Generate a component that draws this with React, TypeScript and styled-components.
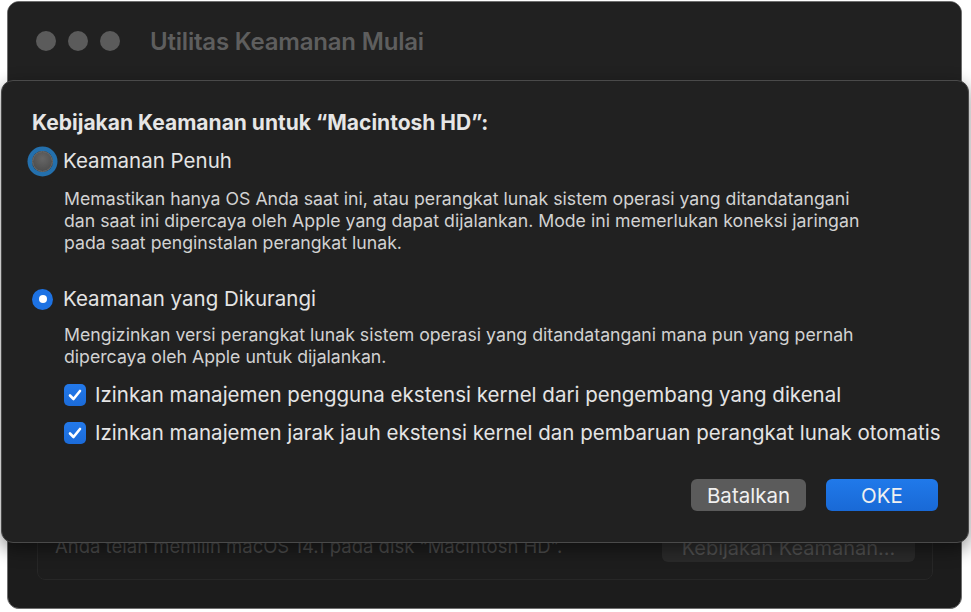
import React from 'react';
import styled, { createGlobalStyle } from 'styled-components';

const GlobalStyle = createGlobalStyle`
  html, body {
    margin: 0;
    padding: 0;
    background: #ffffff;
  }
  body {
    font-family: 'Inter', 'Noto Sans', 'Liberation Sans', sans-serif;
    -webkit-font-smoothing: antialiased;
  }
`;

const Stage = styled.div`
  position: relative;
  width: 971px;
  height: 612px;
  overflow: hidden;
  background: #ffffff;
`;

const Window = styled.div`
  position: absolute;
  left: 7px;
  top: 1px;
  width: 955px;
  height: 608px;
  box-sizing: border-box;
  border: 1px solid #6e6e6e;
  border-radius: 12px;
  background: #1c1c1c;
  display: flex;
  flex-direction: column;
  overflow: hidden;
`;

const TitleBar = styled.div`
  height: 78px;
  flex: none;
  display: flex;
  align-items: center;
  gap: 12px;
  padding-left: 28px;
  background: #212121;
`;

const Light = styled.span`
  width: 20px;
  height: 20px;
  border-radius: 50%;
  background: #5b5b5b;
`;

const WindowTitle = styled.div`
  margin-left: 18px;
  font-size: 24px;
  font-weight: 600;
  color: #5e5e5e;
  letter-spacing: -0.2px;
`;

const WindowBody = styled.div`
  flex: 1;
  display: flex;
  flex-direction: column;
  justify-content: flex-end;
  padding: 0 28px 28px 29px;
`;

const GroupBox = styled.div`
  display: flex;
  align-items: flex-end;
  justify-content: space-between;
  height: 90px;
  box-sizing: border-box;
  padding: 0 17px 17px 17px;
  border: 1px solid #272727;
  border-radius: 8px;
  background: #1d1d1d;
`;

const GroupText = styled.span`
  font-size: 18.5px;
  line-height: 28px;
  margin-bottom: 2px;
  color: #4a4a4a;
`;

const GhostButton = styled.div`
  width: 253px;
  height: 28px;
  border-radius: 6px;
  background: #2a2a2a;
  color: #505050;
  font-size: 20px;
  display: flex;
  align-items: center;
  justify-content: center;
`;

const Sheet = styled.div`
  position: absolute;
  left: 1px;
  top: 80px;
  width: 968px;
  height: 463px;
  box-sizing: border-box;
  border: 1px solid #4a4a4a;
  border-radius: 12px;
  background: #212121;
  box-shadow: 0 6px 18px rgba(0, 0, 0, 0.45);
  padding: 29px 0 0 30px;
  display: flex;
  flex-direction: column;
`;

const Heading = styled.div`
  font-size: 21px;
  font-weight: 700;
  color: #e6e6e6;
  line-height: 26px;
`;

const OptionRow = styled.div<{ $top: number }>`
  display: flex;
  align-items: center;
  gap: 10px;
  margin-top: ${p => p.$top}px;
`;

const RadioOff = styled.span`
  width: 21px;
  height: 21px;
  border-radius: 50%;
  box-sizing: border-box;
  background: radial-gradient(circle at 50% 35%, #666666, #474747);
  border: 1px solid #707070;
  box-shadow: 0 0 0 4.5px #2470ad;
`;

const RadioOn = styled.span`
  width: 21px;
  height: 21px;
  border-radius: 50%;
  background: #1d72e3;
  display: flex;
  align-items: center;
  justify-content: center;
  &::after {
    content: '';
    width: 8px;
    height: 8px;
    border-radius: 50%;
    background: #ffffff;
  }
`;

const OptionLabel = styled.span`
  font-size: 20.5px;
  color: #e4e4e4;
  line-height: 26px;
  white-space: nowrap;
`;

const Description = styled.p<{ $top: number }>`
  margin: ${p => p.$top}px 0 0 32px;
  font-size: 17.7px;
  line-height: 22px;
  color: #d2d2d2;
  white-space: nowrap;
`;

const CheckRow = styled.div<{ $top: number }>`
  display: flex;
  align-items: center;
  gap: 9px;
  margin: ${p => p.$top}px 0 0 32px;
`;

const CheckBox = styled.span`
  width: 22px;
  height: 22px;
  flex: none;
  border-radius: 5px;
  background: linear-gradient(#2379ea, #1b6bd9);
  display: flex;
  align-items: center;
  justify-content: center;
`;

const Footer = styled.div`
  display: flex;
  justify-content: flex-end;
  gap: 20px;
  margin-top: auto;
  padding: 0 30px 31px 0;
`;

const Button = styled.button<{ $primary?: boolean }>`
  height: 32px;
  width: ${p => (p.$primary ? 112 : 115)}px;
  border: none;
  border-radius: 6px;
  font-family: inherit;
  font-size: 20.5px;
  color: #f0f0f0;
  background: ${p => (p.$primary ? 'linear-gradient(#2079ea, #1969d6)' : '#5b5b5b')};
  padding: 0;
`;

const Check = () => (
  <svg width="16" height="16" viewBox="0 0 16 16">
    <path d="M3 8.5 L6.5 12 L13 4" fill="none" stroke="#ffffff" strokeWidth="2.6" strokeLinecap="round" strokeLinejoin="round" />
  </svg>
);

export default function App() {
  return (
    <Stage>
      <GlobalStyle />
      <Window>
        <TitleBar>
          <Light />
          <Light />
          <Light />
          <WindowTitle>Utilitas Keamanan Mulai</WindowTitle>
        </TitleBar>
        <WindowBody>
          <GroupBox>
            <GroupText>Anda telah memilih macOS 14.1 pada disk “Macintosh HD”.</GroupText>
            <GhostButton>Kebijakan Keamanan...</GhostButton>
          </GroupBox>
        </WindowBody>
      </Window>
      <Sheet>
        <Heading>Kebijakan Keamanan untuk “Macintosh HD”:</Heading>
        <OptionRow $top={12}>
          <RadioOff />
          <OptionLabel>Keamanan Penuh</OptionLabel>
        </OptionRow>
        <Description $top={14}>
          Memastikan hanya OS Anda saat ini, atau perangkat lunak sistem operasi yang ditandatangani
          <br />
          dan saat ini dipercaya oleh Apple yang dapat dijalankan. Mode ini memerlukan koneksi jaringan
          <br />
          pada saat penginstalan perangkat lunak.
        </Description>
        <OptionRow $top={32}>
          <RadioOn />
          <OptionLabel>Keamanan yang Dikurangi</OptionLabel>
        </OptionRow>
        <Description $top={12}>
          Mengizinkan versi perangkat lunak sistem operasi yang ditandatangani mana pun yang pernah
          <br />
          dipercaya oleh Apple untuk dijalankan.
        </Description>
        <CheckRow $top={14}>
          <CheckBox>
            <Check />
          </CheckBox>
          <OptionLabel>Izinkan manajemen pengguna ekstensi kernel dari pengembang yang dikenal</OptionLabel>
        </CheckRow>
        <CheckRow $top={12}>
          <CheckBox>
            <Check />
          </CheckBox>
          <OptionLabel>Izinkan manajemen jarak jauh ekstensi kernel dan pembaruan perangkat lunak otomatis</OptionLabel>
        </CheckRow>
        <Footer>
          <Button>Batalkan</Button>
          <Button $primary>OKE</Button>
        </Footer>
      </Sheet>
    </Stage>
  );
}
